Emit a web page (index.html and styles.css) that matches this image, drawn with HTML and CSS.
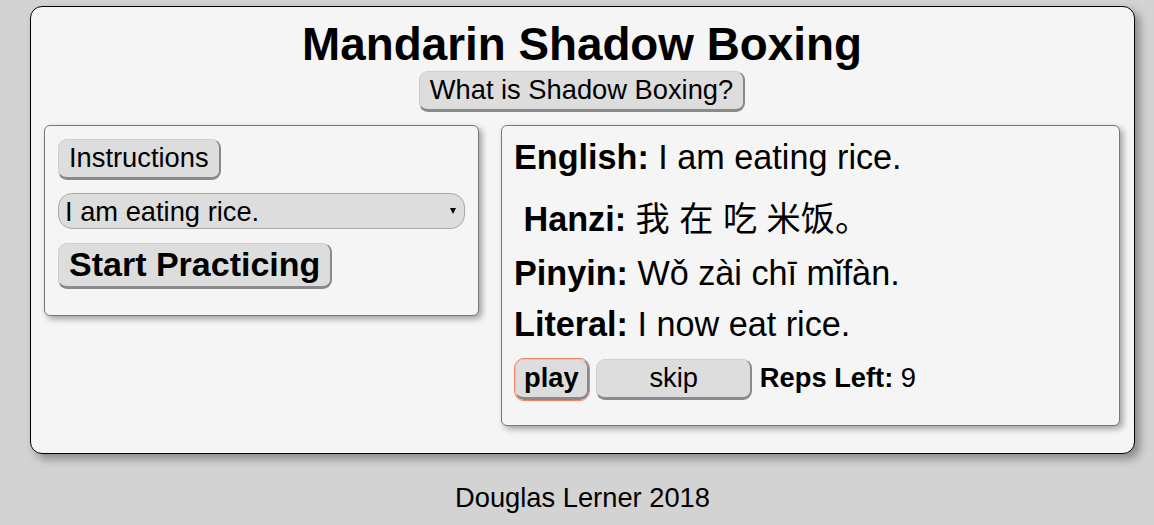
FILE: index.html
```html
<!DOCTYPE html>
<html>
<head>
<meta charset="utf-8">
<title>Mandarin Shadow Boxing</title>
<link rel="stylesheet" href="styles.css">
</head>
<body>
<div class="card">
  <h1 class="title">Mandarin Shadow Boxing</h1>
  <div class="about"><button class="btn btn-about">What is Shadow Boxing?</button></div>
  <div class="panels">
    <div class="panel panel-left">
      <button class="btn">Instructions</button>
      <div class="select-wrap">
        <select class="sentence">
          <option>I am eating rice.</option>
        </select>
        <span class="select-arrow"></span>
      </div>
      <button class="btn btn-start">Start Practicing</button>
    </div>
    <div class="panel panel-right">
      <div class="row row-english"><b>English:</b> I am eating rice.</div>
      <div class="row row-hanzi"><b>&nbsp;Hanzi:</b> 我 在 吃 米饭。</div>
      <div class="row row-pinyin"><b>Pinyin:</b> Wǒ zài chī mǐfàn.</div>
      <div class="row row-literal"><b>Literal:</b> I now eat rice.</div>
      <div class="controls"><button class="btn btn-play">play</button> <button class="btn btn-skip">skip</button> <b>Reps Left:</b> 9</div>
    </div>
  </div>
</div>
<div class="footer">Douglas Lerner 2018</div>
</body>
</html>
```
FILE: styles.css
```css
html, body {
  margin: 0;
  padding: 0;
}
body {
  background: #d3d3d3;
  font-family: "Liberation Sans", Arial, "Noto Sans CJK SC", sans-serif;
  font-size: 27.3px;
  color: #000;
}
.card {
  margin: 6px 19px 0 30px;
  background: #f5f5f5;
  border: 1px solid #000;
  border-radius: 12px;
  box-shadow: 5px 5px 10px rgba(0, 0, 0, 0.35);
  padding: 12px 14px 27px 13px;
}
.title {
  margin: 0;
  font-size: 45.8px;
  font-weight: bold;
  text-align: center;
  line-height: 52px;
}
.about {
  text-align: center;
  margin-bottom: 13px;
}
.btn {
  font-family: "Liberation Sans", Arial, sans-serif;
  font-size: 27.3px;
  color: #000;
  background: #dddddd;
  border: 1px solid #cfcfcf;
  border-right: 2px solid #8a8a8a;
  border-bottom: 3px solid #8a8a8a;
  border-radius: 9px;
  padding: 2px 10px 3px;
  line-height: normal;
  margin: 0;
}
.btn-about {
  padding: 2px 10px 3px;
}
.panels {
  display: flex;
  align-items: flex-start;
  gap: 22px;
}
.panel {
  background: #f5f5f5;
  border: 1px solid #777;
  border-radius: 6px;
  box-shadow: 3px 3px 6px rgba(0, 0, 0, 0.35);
}
.panel-left {
  width: 435px;
  box-sizing: border-box;
  padding: 13px 13px 26px;
  display: flex;
  flex-direction: column;
  align-items: flex-start;
  gap: 13px;
}
.select-wrap {
  position: relative;
  width: 407px;
  height: 36px;
}
.sentence {
  appearance: none;
  -webkit-appearance: none;
  width: 407px;
  height: 36px;
  font-family: "Liberation Sans", Arial, sans-serif;
  font-size: 27.3px;
  color: #000;
  background-color: #dddddd;
  border: 1px solid #a8a8a8;
  border-radius: 14px;
  padding: 0 4px 0 6px;
  margin: 0;
  display: block;
}
.select-arrow {
  position: absolute;
  right: 9px;
  top: 15px;
  width: 0;
  height: 0;
  border-left: 3.5px solid transparent;
  border-right: 3.5px solid transparent;
  border-top: 6px solid #000;
  pointer-events: none;
}
.btn-start {
  font-size: 34px;
  font-weight: bold;
  padding: 1px 10px 2px;
  margin-top: 1px;
}
.panel-right {
  flex: 1;
  padding: 12px 12px 25px;
  font-size: 34.2px;
}
.row {
  line-height: 38px;
  font-family: "Liberation Sans", Arial, "Noto Sans CJK SC", sans-serif;
}
.row-hanzi {
  margin-top: 24px;
}
.row-pinyin {
  margin-top: 16px;
}
.row-literal {
  margin-top: 13px;
}
.controls {
  margin-top: 16px;
  font-size: 27.3px;
  line-height: normal;
}
.btn-play {
  font-weight: bold;
  padding: 2px 8px 3px;
  outline: 1px solid #f0825f;
  outline-offset: 0;
  margin-left: 1px;
}
.btn-skip {
  width: 156px;
  padding: 2px 10px 3px;
}
.footer {
  margin: 28px 19px 0 30px;
  width: 1105px;
  text-align: center;
  font-size: 27.3px;
  line-height: normal;
}
```
